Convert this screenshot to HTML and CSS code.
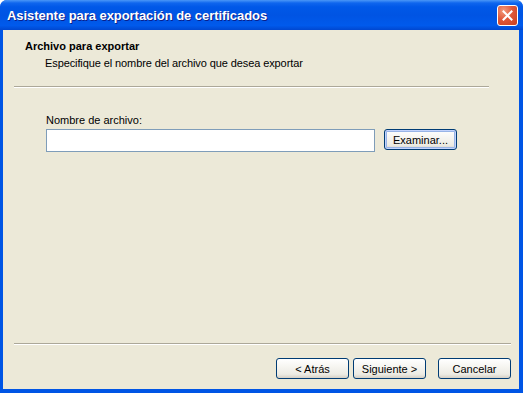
FILE: index.html
```html
<!DOCTYPE html>
<html lang="es">
<head>
    <meta charset="UTF-8">
    <meta name="viewport" content="width=device-width, initial-scale=1.0">
    <title>Asistente para exportación de certificados</title>
    <link rel="stylesheet" href="styles.css">
</head>
<body>
    <div class="window">
        <div class="titlebar">
            <span class="title">Asistente para exportación de certificados</span>
            <button class="close" aria-label="Cerrar">
                <svg width="11" height="11" viewBox="0 0 11 11">
                    <path d="M1.5 1.5 L9.5 9.5 M9.5 1.5 L1.5 9.5" stroke="#fff" stroke-width="2" stroke-linecap="square"/>
                </svg>
            </button>
        </div>
        <div class="client">
            <div class="header">
                <div class="heading">Archivo para exportar</div>
                <div class="subheading">Especifique el nombre del archivo que desea exportar</div>
            </div>
            <div class="sep top-sep"></div>
            <div class="form">
                <label for="file">Nombre de archivo:</label>
                <div class="row">
                    <input type="text" id="file">
                    <button class="btn default">Examinar...</button>
                </div>
            </div>
            <div class="footer">
                <div class="sep"></div>
                <div class="buttons">
                    <button class="btn">&lt; Atrás</button>
                    <button class="btn">Siguiente &gt;</button>
                    <button class="btn cancel">Cancelar</button>
                </div>
            </div>
        </div>
    </div>
</body>
</html>
```

FILE: styles.css
```css
*{
    margin: 0;
    padding: 0;
    box-sizing: border-box;
}
body{
    width: 523px;
    height: 393px;
    overflow: hidden;
    font-family: "Liberation Sans", Arial, sans-serif;
    font-size: 11px;
    color: #000;
}
.window{
    width: 523px;
    height: 393px;
    display: flex;
    flex-direction: column;
    background: #0055e5;
    border-radius: 7px 7px 0 0;
    padding: 0 4px 4px 3px;
}
.titlebar{
    height: 30px;
    margin: 0 -4px 0 -3px;
    padding: 0 5px 0 7px;
    display: flex;
    align-items: center;
    justify-content: space-between;
    border-radius: 7px 7px 0 0;
    background: linear-gradient(#4a97f7 0, #0f66ee 3px, #0058e8 7px, #0054e3 50%, #005aec 85%, #0047d0 100%);
}
.title{
    color: #fff;
    font-weight: bold;
    font-size: 13px;
    letter-spacing: -0.05px;
    text-shadow: 1px 1px 0 #0a1f8a;
    margin-top: 1px;
}
.close{
    width: 21px;
    height: 21px;
    margin-top: 1px;
    border: 1px solid #fff;
    border-radius: 3px;
    background: radial-gradient(circle at 30% 25%, #f29b7c 0, #e0583a 45%, #c93f1f 100%);
    display: flex;
    align-items: center;
    justify-content: center;
}
.client{
    flex: 1;
    background: #ece9d8;
    display: flex;
    flex-direction: column;
    padding: 0 0 0 1px;
}
.header{
    padding: 9px 0 0 21px;
}
.heading{
    font-weight: bold;
    line-height: 14px;
}
.subheading{
    line-height: 14px;
    letter-spacing: -0.1px;
    margin: 3px 0 0 20px;
}
.sep{
    height: 2px;
    border-top: 1px solid #aca899;
    border-bottom: 1px solid #fff;
}
.top-sep{
    margin: 16px 30px 0 10px;
}
.form{
    padding: 25px 0 0 42px;
}
.form label{
    display: block;
    line-height: 14px;
}
.row{
    display: flex;
    align-items: flex-start;
    gap: 9px;
    margin-top: 2px;
}
.row input{
    width: 329px;
    height: 23px;
    border: 1px solid #7f9db9;
    background: #fff;
    font: inherit;
}
.btn{
    width: 73px;
    height: 21px;
    font: inherit;
    color: #000;
    border: 1px solid #003c74;
    border-radius: 3px;
    background: linear-gradient(#fff 0, #f5f4ef 45%, #ecebe4 80%, #d6d0c5 100%);
}
.btn.default{
    box-shadow: inset 0 0 0 1px #c2d3fc, inset 0 0 0 2px #98b4e6;
}
.footer{
    margin-top: auto;
    padding: 0 8px 10px 10px;
}
.buttons{
    display: flex;
    justify-content: flex-end;
    gap: 4px;
    margin-top: 13px;
}
.buttons .cancel{
    margin-left: 8px;
}
```
